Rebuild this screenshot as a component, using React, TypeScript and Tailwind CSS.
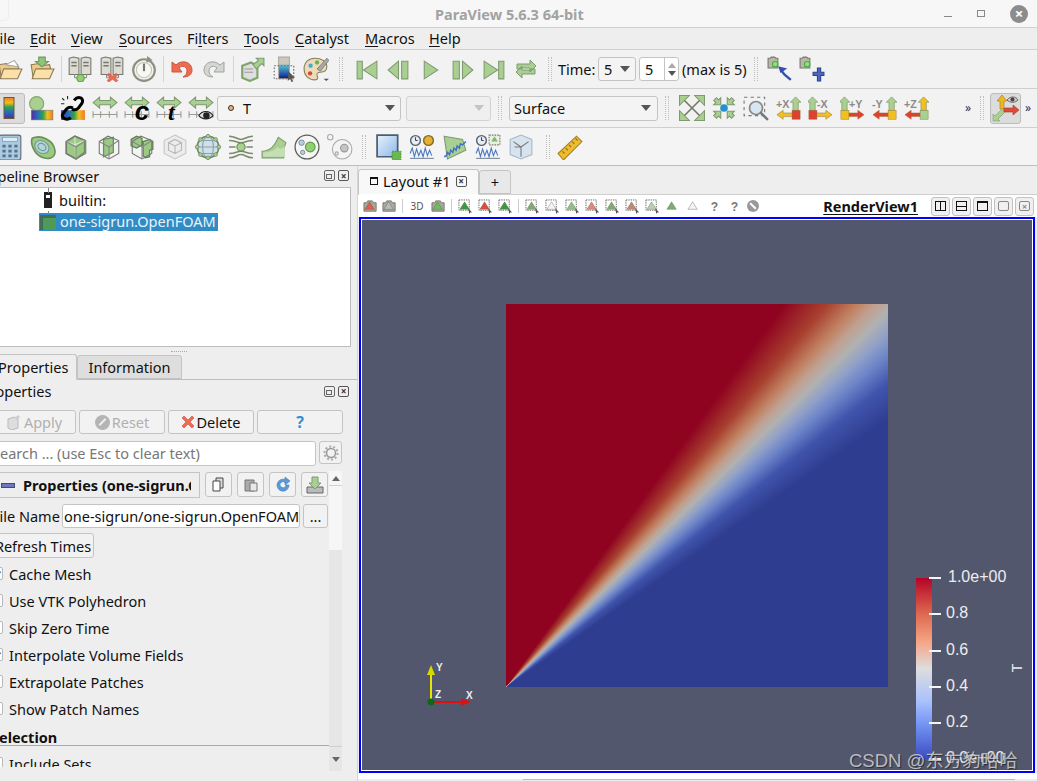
import type { ReactNode } from 'react';

const G = { fill: '#a9d091', stroke: '#7f9a72' };

function Svg({ s = 24, children }: { s?: number; children: ReactNode }) {
  return (
    <svg width={s} height={s} viewBox="0 0 24 24" className="block shrink-0">
      {children}
    </svg>
  );
}

function Slot({ w = 'w-[32px]', children }: { w?: string; children?: ReactNode }) {
  return <div className={`${w} h-full shrink-0 flex items-center justify-center`}>{children}</div>;
}

function Sep() {
  return (
    <div className="w-[6px] h-full shrink-0 flex items-center justify-center">
      <div className="w-px h-[26px] bg-[#d4d4d4]" />
    </div>
  );
}

function Grip({ w }: { w: string }) {
  return (
    <div className={`${w} h-full shrink-0 flex items-center justify-center`}>
      <div className="w-[4px] h-[24px] border-x border-dotted border-[#bdbdbd]" />
    </div>
  );
}

function Caret({ c = '#555' }: { c?: string }) {
  return (
    <svg width="10" height="6" viewBox="0 0 10 6" className="shrink-0">
      <path d="M0 0h10L5 6z" fill={c} />
    </svg>
  );
}

function Folder({ down }: { down?: boolean }) {
  return (
    <Svg s={26}>
      <path d="M2 8l7-1 2 2 8-1 1 4H7L4 21z" fill="#efc987" stroke="#8b7a55" />
      {!down && <path d="M8 8l8-4 4 6z" fill="#fff" stroke="#aaa" />}
      <path d="M6 12h17l-4 9H3z" fill="#fbe0a8" stroke="#8b7a55" />
      {down && <path d="M9 1h6v4h3l-6 5-6-5h3z" fill="#8fc57a" stroke="#6f9a5f" />}
    </Svg>
  );
}

function Server({ state }: { state: 'on' | 'off' }) {
  const box = (x: number) => (
    <g>
      <path d={`M${x} 2l4-1 5 1v15h-9z`} fill="#dcdcd4" stroke="#77776d" />
      <path d={`M${x + 2} 6h5M${x + 2} 9h5`} stroke="#77776d" strokeWidth="1.5" />
    </g>
  );
  return (
    <Svg s={26}>
      {box(2)}
      {box(13)}
      <path d="M7 17v3M18 17v3M7 20h11" stroke="#888" fill="none" />
      {state === 'on' ? (
        <circle cx="12.5" cy="20.5" r="3.4" fill="#8fd06f" stroke="#5f9a4f" />
      ) : (
        <path d="M9 16l3.500 2.500L16 16l1.500 1.500-3 2.500 3 2.500L16 24l-3.500-2.500L9 24l-1.500-1.500 3-2.500-3-2.500z" fill="#ee6a50" stroke="#c0503c" strokeWidth=".5" />
      )}
    </Svg>
  );
}

function Clock() {
  return (
    <Svg s={26}>
      <circle cx="12" cy="13" r="10" fill="none" stroke="#8f9080" strokeWidth="2" />
      <circle cx="12" cy="13" r="7" fill="#f8f8f2" stroke="#c4c4ba" />
      <path d="M12 7v7" stroke="#77776d" strokeWidth="2" />
      <path d="M15 0l5 4-6 2z" fill="#8f9080" />
    </Svg>
  );
}

function Undo({ redo }: { redo?: boolean }) {
  return (
    <svg width="24" height="24" viewBox="0 0 24 24" className={redo ? 'block -scale-x-100' : 'block'}>
      <path
        d="M2 5v10h10l-3-4c3-3 8-2 8 3 0 3-2 5-4 6 6 0 9-3 9-7 0-8-10-11-16-5z"
        fill={redo ? '#d4d6d4' : '#ee6a50'}
        stroke={redo ? '#a0a2a0' : '#c95a3c'}
      />
    </svg>
  );
}

function Extract() {
  return (
    <Svg s={26}>
      <path d="M3 9l8-3 6 3v11l-7 3-7-3z" fill="#dedede" stroke="#7fa66a" strokeWidth="2" />
      <path d="M5 12h8M5 15h8" stroke="#999" />
      <path d="M13 8l5-4-2-2h7v7l-2-2-5 5z" fill={G.fill} stroke={G.stroke} />
    </Svg>
  );
}

function ColorPick() {
  return (
    <Svg s={26}>
      <defs>
        <linearGradient id="cp" x1="0" y1="0" x2="0" y2="1">
          <stop offset=".3" stopColor="#cfc8ba" />
          <stop offset=".45" stopColor="#46b0c8" />
          <stop offset=".85" stopColor="#1f3fa8" />
          <stop offset="1" stopColor="#1a1a40" />
        </linearGradient>
      </defs>
      <path d="M7 1h10v20H7z" fill="url(#cp)" stroke="#aaa" />
      <path d="M3 9h18v12H3z" fill="none" stroke="#666" strokeDasharray="1.5 1.5" />
      <path d="M16 14l6 6-3 .5 1.500 3-1.500.5-1.500-3-2 2z" fill="#555" />
    </Svg>
  );
}

function Palette() {
  return (
    <Svg s={26}>
      <path d="M11 2C5 2 1 6 1 12s4 10 10 10c3 0 3-2 2-4s1-3 3-3 6 0 6-5c0-5-5-8-11-8z" fill="#ecdcb8" stroke="#8b7f62" />
      <circle cx="7" cy="9" r="2" fill="#43a9dc" />
      <circle cx="13" cy="6" r="2" fill="#6fb24c" />
      <circle cx="6.5" cy="16" r="2" fill="#e0453a" />
      <path d="M22 2l2 2-8 10-3-2z" fill="#a8a8a8" stroke="#666" strokeWidth=".6" />
      <path d="M19 21h5l-2.500 2z" fill="#555" />
    </Svg>
  );
}

function Vcr({ kind }: { kind: 'first' | 'prev' | 'play' | 'next' | 'last' }) {
  const d = {
    first: 'M3 4h5v17H3zM22 4v17L9 12.500z',
    prev: 'M12 4v17L2 12.500zM15 4h6v17h-6z',
    play: 'M6 4l13 8.500L6 21z',
    next: 'M3 4h6v17H3zM12 4l10 8.500L12 21z',
    last: 'M2 4l13 8.500L2 21zM16 4h5v17h-5z',
  }[kind];
  return (
    <Svg s={25}>
      <path d={d} fill={G.fill} stroke={G.stroke} />
    </Svg>
  );
}

function Loop() {
  return (
    <Svg s={24}>
      <path d="M3 12V7h13V3l6 6-6 6v-4H7v1zM21 12v5H8v4l-6-6 6-6v4h9v-1z" fill={G.fill} stroke={G.stroke} />
    </Svg>
  );
}

function CamTool({ plus }: { plus?: boolean }) {
  return (
    <Svg s={26}>
      <path d="M1 2h2l1-1h3l1 1h2v9H1z" fill="#b6b8a6" stroke="#77776d" />
      <circle cx="7.5" cy="7.5" r="2.500" fill="#8fe07f" stroke="#4faa44" />
      {plus ? (
        <path d="M13 15h4v-4h3v4h3v3h-3v5h-3v-5h-4z" fill="#4a66c0" stroke="#2f3f8f" />
      ) : (
        <path d="M13 13l3 4 6 5M13 14l-1-3 4 1z" fill="none" stroke="#3350b0" strokeWidth="2.2" />
      )}
    </Svg>
  );
}

function Spectrum({ id, x1 = 0, y1 = 1, x2 = 0, y2 = 0 }: { id: string; x1?: number; y1?: number; x2?: number; y2?: number }) {
  return (
    <defs>
      <linearGradient id={id} x1={x1} y1={y1} x2={x2} y2={y2}>
        <stop offset="0" stopColor="#5a2a9a" />
        <stop offset=".3" stopColor="#1f6fc0" />
        <stop offset=".55" stopColor="#37a04a" />
        <stop offset=".75" stopColor="#f0c020" />
        <stop offset="1" stopColor="#ee7a20" />
      </linearGradient>
    </defs>
  );
}

function ScalarBar() {
  return (
    <Svg s={24}>
      <Spectrum id="sb" />
      <rect x="7" y="1.5" width="10" height="21" fill="url(#sb)" stroke="#6b5a3a" />
    </Svg>
  );
}

function BallBar() {
  return (
    <Svg s={26}>
      <Spectrum id="bb" x1={0} y1={0} x2={1} y2={0} />
      <circle cx="8" cy="8" r="6.5" fill={G.fill} stroke="#7fa66a" />
      <rect x="3" y="14" width="20" height="9" fill="url(#bb)" stroke="#777" strokeWidth=".5" />
    </Svg>
  );
}

function ChainBar() {
  return (
    <Svg s={26}>
      <Spectrum id="cb" x1={0} y1={0} x2={1} y2={0} />
      <rect x="1" y="14" width="22" height="9" fill="url(#cb)" />
      <path d="M13 5c4-5 10-2 7 3l-3 4c-2 2-4 2-6 1" fill="none" stroke="#000" strokeWidth="2.8" />
      <path d="M10 21c-4 3-10 0-7-4l3-4c2-2 4-2 6-1" fill="none" stroke="#000" strokeWidth="2.8" />
      <path d="M2 3l2 2M7 1v3M1 8h3" stroke="#222" />
    </Svg>
  );
}

function Rescale({ glyph }: { glyph?: 'c' | 't' | 'eye' }) {
  return (
    <Svg s={26}>
      <path d="M1 7l6-5v3h10V2l6 5-6 5V9H7v3z" fill={G.fill} stroke={G.stroke} />
      <path d="M1 18h22M1 15v6M8 15v6M16 15v6M23 15v6" fill="none" stroke="#9a9a94" />
      {glyph === 'c' && <text x="10" y="23" fontSize="24" fontWeight="700" fontStyle="italic" fontFamily="Liberation Sans, sans-serif">c</text>}
      {glyph === 't' && <text x="11" y="23" fontSize="22" fontWeight="700" fontStyle="italic" fontFamily="Liberation Serif, serif">t</text>}
      {glyph === 'eye' && (
        <g>
          <path d="M10 19c3-5 10-5 13 0-3 4-10 4-13 0z" fill="#ddd" stroke="#222" />
          <circle cx="17" cy="19" r="3" fill="#222" />
        </g>
      )}
    </Svg>
  );
}

function FitIn({ inward }: { inward?: boolean }) {
  return (
    <Svg s={26}>
      {!inward && <path d="M3 3l18 18M21 3L3 21" stroke="#6f7a68" strokeWidth="1.5" />}
      {[0, 90, 180, 270].map(a => (
        <g key={a} transform={`rotate(${a} 12 12)`}>
          {inward ? (
            <path d="M9 9H2.500l2-2-2-2 2.500-2.500 2 2 2-2z" fill={G.fill} stroke={G.stroke} />
          ) : (
            <path d="M.5 .5h9l-9 9z" fill={G.fill} stroke={G.stroke} />
          )}
        </g>
      ))}
      {inward && <circle cx="12" cy="12" r="3.5" fill="#2490d0" />}
    </Svg>
  );
}

function ZoomBox() {
  return (
    <Svg s={26}>
      <path d="M1 2h19v17H1z" fill="none" stroke="#777" strokeDasharray="3 3" />
      <circle cx="12" cy="12" r="6" fill="#d6e6f2" stroke="#8a8a8a" strokeWidth="1.6" />
      <path d="M16 16l7 7" stroke="#777" strokeWidth="2.4" />
    </Svg>
  );
}

function Axis({ label, side, up, h, box }: { label: string; side: 'l' | 'r'; up: string; h: string; box: string }) {
  const left = side === 'l';
  return (
    <svg width="25" height="25" viewBox="0 0 28 28" className="block shrink-0">
      <text x={left ? 10 : 0} y="13" fontSize="12" fontWeight="700" fill="#8a8a8a" fontFamily="Liberation Sans, sans-serif">{label}</text>
      <path transform={left ? 'translate(5 0)' : 'translate(22 0)'} d="M-3 16V7H-6L0 1l6 6H3v9z" fill={up} stroke="#7f8a60" strokeWidth=".7" />
      {left ? (
        <>
          <path d="M9 19h11v-3l7 5-7 5v-3H9z" fill={h} stroke="#9a7a40" strokeWidth=".6" />
          <rect x="1" y="16" width="9" height="10" fill={box} stroke="#8a7040" strokeWidth=".5" />
        </>
      ) : (
        <>
          <path d="M19 19H8v-3l-7 5 7 5v-3h11z" fill={h} stroke="#9a7a40" strokeWidth=".6" />
          <rect x="18" y="16" width="9" height="10" fill={box} stroke="#8a7040" strokeWidth=".5" />
        </>
      )}
    </svg>
  );
}

function AxesToggle() {
  return (
    <svg width="28" height="28" viewBox="0 0 28 28" className="block shrink-0">
      <path d="M8 15V7H5l5-6 5 6h-3v8z" fill="#f0b820" stroke="#9a7a30" strokeWidth=".6" />
      <path d="M10 15l-7 7-2-2v7h7l-2-2 7-7z" fill={G.fill} stroke={G.stroke} strokeWidth=".6" />
      <path d="M12 14h9v-3l6 5-6 5v-3h-9z" fill="#e04a38" stroke="#a03a2a" strokeWidth=".6" />
      <path d="M15 6c3-4 9-4 11 0-3 3-8 3-11 0z" fill="#ccc" stroke="#666" />
      <circle cx="20.5" cy="5.5" r="2" fill="#444" />
    </svg>
  );
}

function Calc() {
  return (
    <Svg s={26}>
      <rect x="2" y="1" width="20" height="23" rx="2" fill="#a9cbe4" stroke="#667" />
      <rect x="5" y="3" width="14" height="4" fill="#dcecf6" stroke="#78899a" strokeWidth=".6" />
      <path d="M5 10h3v2.500H5zM10.500 10h3v2.500h-3zM16 10h3v2.500h-3zM5 14.500h3V17H5zM10.500 14.500h3V17h-3zM16 14.500h3V17h-3zM5 19h3v2.500H5zM10.500 19h3v2.500h-3zM16 19h3v2.500h-3z" fill="#5d7183" />
    </Svg>
  );
}

function Contour() {
  return (
    <Svg s={26}>
      <path d="M2 4c8-4 20 2 21 11 1 8-7 9-13 6C4 18 0 9 2 4z" fill="#9bca82" stroke="#6b8f5c" strokeWidth="1.5" />
      <ellipse cx="11" cy="12" rx="7" ry="5.5" transform="rotate(35 11 12)" fill="#b6d6d2" stroke="#6f9a90" />
      <ellipse cx="11" cy="12" rx="4" ry="3" transform="rotate(35 11 12)" fill="none" stroke="#5f90a8" />
    </Svg>
  );
}

function Cube({ kind }: { kind: 'clip' | 'slice' | 'extract' | 'gray' }) {
  if (kind === 'gray') {
    return (
      <Svg s={26}>
        <path d="M12 1l10 5v12l-10 5-10-5V6z" fill="#ececec" stroke="#c6c6c6" />
        <path d="M12 5l6 3v7l-6 3-6-3V8zM12 11v7M6 8l6 3 6-3" fill="none" stroke="#b6b6b6" />
      </Svg>
    );
  }
  return (
    <Svg s={26}>
      {kind === 'clip' && <path d="M3 7l8-5 9 4v11l-8 6-9-5z" fill="#9cca84" stroke="#6b8f5c" strokeWidth="1.5" />}
      {kind === 'slice' && <path d="M7 5l9-2v14l-9 4z" fill="#9cca84" stroke="#6b8f5c" strokeWidth="1.2" />}
      {kind === 'extract' && <path d="M2 5l5-3 5 2v6l-5 3-5-2zM13 7l6-2 3 2v7l-3 1v6l-4 1-2-2z" fill="#9cca84" stroke="#5f7f50" strokeWidth="1.2" />}
      {kind === 'clip' && <path d="M11 2v8l9-4M11 10l1 13M11 10l-8-3" fill="none" stroke="#d6ead0" />}
      <path d="M3 7l8-5 10 4v12l-9 5-9-5z" fill="none" stroke="#777" />
      <path d="M3 7l9 5 9-6M12 12v11" fill="none" stroke="#888" />
    </Svg>
  );
}

function Globe() {
  return (
    <Svg s={26}>
      <circle cx="12" cy="12" r="10" fill="#cfe0ea" stroke="#6d8a5e" strokeWidth="1.4" />
      <ellipse cx="12" cy="12" rx="5" ry="10" fill="none" stroke="#8ca0aa" />
      <path d="M2 12h20M4 6h16M4 18h16" stroke="#8ca0aa" />
      {[[12, 2], [12, 22], [2, 12], [22, 12], [5, 5], [19, 5], [5, 19], [19, 19]].map(([x, y]) => (
        <circle key={`${x}-${y}`} cx={x} cy={y} r="1.7" fill={G.fill} stroke="#6d8a5e" strokeWidth=".7" />
      ))}
    </Svg>
  );
}

function Stream() {
  return (
    <Svg s={26}>
      <path d="M1 2c6 0 7 3 11 3s5-3 11-3M1 6c6 0 7 2 11 2s5-2 11-2M1 12h6M17 12h6M1 18c6 0 7-2 11-2s5 2 11 2M1 22c6 0 7-3 11-3s5 3 11 3" fill="none" stroke="#7a8a6c" strokeWidth="1.4" />
      <circle cx="12" cy="12" r="3.800" fill={G.fill} stroke="#5f8f4f" />
    </Svg>
  );
}

function Warp() {
  return (
    <Svg s={26}>
      <path d="M1 16c8-1 11-4 15-13l7 5c-2 4-2 9-2 14H1z" fill="#a9d091" stroke="#7f9a72" />
      <path d="M2 17c7 0 11-2 13-5 2 2 5 2 7-1v10H2z" fill="#c4dfb6" />
    </Svg>
  );
}

function Glyph({ gray }: { gray?: boolean }) {
  if (gray) {
    return (
      <Svg s={26}>
        <circle cx="14" cy="14" r="9" fill="#f4f4f4" stroke="#a8a8a8" />
        <circle cx="16" cy="13" r="3.5" fill="#c4c4c4" stroke="#999" />
        <circle cx="9" cy="18" r="1.5" fill="#e4e4e4" stroke="#aaa" />
        <circle cx="3" cy="3" r="2.5" fill="#f4f4f4" stroke="#aaa" />
      </Svg>
    );
  }
  return (
    <Svg s={26}>
      <circle cx="12" cy="12" r="11" fill="#f6f6f6" stroke="#5d6258" strokeWidth="1.2" />
      <circle cx="15" cy="12" r="4.5" fill="#8fd06f" stroke="#5f9a4f" />
      <circle cx="7" cy="8" r="2.5" fill="#b6cfe6" stroke="#678" strokeWidth=".7" />
      <circle cx="8" cy="17" r="2" fill="#b6cfe6" stroke="#678" strokeWidth=".7" />
    </Svg>
  );
}

function NewView() {
  return (
    <Svg s={26}>
      <defs>
        <linearGradient id="nv" x1="0" y1="0" x2="1" y2="1">
          <stop offset="0" stopColor="#e8f2fc" />
          <stop offset="1" stopColor="#8cb6ea" />
        </linearGradient>
      </defs>
      <path d="M1 1h19v20H1z" fill="url(#nv)" stroke="#47606f" strokeWidth="1.6" />
      <rect x="15" y="16" width="8" height="8" fill="#6bb84f" stroke="#4f9a3a" strokeDasharray="1.5 1" />
    </Svg>
  );
}

function Chart({ kind }: { kind: 'a' | 'b' | 'c' }) {
  return (
    <Svg s={26}>
      {kind === 'b' ? (
        <path d="M2 2l17 3 3 10-17 8z" fill="#a9d091" stroke="#7f9a72" />
      ) : (
        <circle cx="6" cy="6" r="4.5" fill="#e4eef4" stroke="#58626a" strokeWidth="1.3" />
      )}
      {kind === 'a' && <circle cx="18" cy="6" r="4.5" fill="#e8b030" stroke="#7f6a20" strokeWidth="1.3" />}
      {kind === 'c' && <path d="M13 1h10v9H13z" fill="#e8f0e0" stroke="#777" strokeDasharray="1.5 1" />}
      {kind === 'c' && <path d="M18 2l3 5h-6z" fill="#7fb86a" />}
      {kind !== 'b' && <path d="M6 6V3M6 6h2" stroke="#445" />}
      {kind === 'b' ? (
        <path d="M2 21l2-1 1-3 2 2 1-4 2 2 1-4 2 2 1-4 2 2 1-4 2 1 3-3" fill="none" stroke="#3f6ec8" strokeWidth="1.3" />
      ) : (
        <path d="M1 18l2-5 2 8 2-7 2 6 2-5 2 6 2-8 2 7 2-5 2 5" fill="none" stroke="#4a78c0" strokeWidth="1" />
      )}
      {kind !== 'b' && <path d="M1 22.500h22" stroke="#789" />}
    </Svg>
  );
}

function PlotCube() {
  return (
    <Svg s={26}>
      <path d="M2 5l10-4 10 4v14l-10 4-10-4z" fill="#d6e4f0" stroke="#a8b8c8" />
      <path d="M12 12L5 7M12 12l7-5M12 12v9M12 12H6" stroke="#777" />
    </Svg>
  );
}

function Ruler() {
  return (
    <Svg s={26}>
      <path d="M1 18L18 2l5 5L6 24z" fill="#eebc2c" stroke="#a88420" />
      <path d="M5 16l2 2M8 13l2 2M11 10l2 2M14 7l2 2M17 4l2 2" stroke="#8f7018" />
    </Svg>
  );
}

function Mini({ color = '#5f7a55', kind = 'sel' }: { color?: string; kind?: 'sel' | 'tri' | 'cam' | 'q' }) {
  return (
    <svg width="15" height="15" viewBox="0 0 16 16" className="block shrink-0">
      {kind === 'sel' && <path d="M1 1h11v11H1z" fill="none" stroke="#666" strokeDasharray="1.5 1" />}
      {kind === 'cam' && <path d="M1 4h3l1-2h5l1 2h3v9H1z" fill="#a8aa9a" stroke="#77776d" />}
      {kind === 'q' ? (
        <text x="5" y="13" fontSize="13" fontWeight="700" fill="#777" fontFamily="Liberation Sans, sans-serif">?</text>
      ) : (
        <path d="M7 3l5 8H2z" fill={color} stroke="#556" strokeWidth=".4" />
      )}
      {kind === 'sel' && <path d="M11 10l4 4-2 .3-1 1.700z" fill="#555" />}
    </svg>
  );
}

function WinBtn({ children }: { children: ReactNode }) {
  return (
    <div className="w-[19px] h-[19px] rounded-[3px] border border-[#c2c2c2] bg-[#f0f0f0] flex items-center justify-center">
      {children}
    </div>
  );
}

function DockBtns() {
  return (
    <div className="flex items-center gap-[3px]">
      <div className="w-[11px] h-[11px] rounded-[2px] border border-[#666] relative">
        <div className="absolute left-[1px] bottom-[1px] w-[6px] h-[5px] border border-[#666] bg-[#eee]" />
      </div>
      <div className="w-[11px] h-[11px] rounded-[2px] border border-[#555] flex items-center justify-center text-[10px] leading-none font-bold text-[#333]">×</div>
    </div>
  );
}

function Btn({ className, children }: { className: string; children: ReactNode }) {
  return (
    <div className={`${className} rounded-[3px] border border-[#c4c4c4] bg-[#f2f2f2] flex items-center justify-center shrink-0`}>
      {children}
    </div>
  );
}

const menu = [
  ['F', 'ile', 'w-[38px]'],
  ['E', 'dit', 'w-[41px]'],
  ['V', 'iew', 'w-[48px]'],
  ['S', 'ources', 'w-[68px]'],
  ['', 'Filters', 'w-[57px]'],
  ['T', 'ools', 'w-[51px]'],
  ['C', 'atalyst', 'w-[70px]'],
  ['M', 'acros', 'w-[64px]'],
  ['H', 'elp', 'w-[50px]'],
];

const checks = [
  ['Cache Mesh', true],
  ['Use VTK Polyhedron', false],
  ['Skip Zero Time', false],
  ['Interpolate Volume Fields', true],
  ['Extrapolate Patches', false],
  ['Show Patch Names', false],
] as const;

const ticks = [
  ['1.0e+00', 'top-[357px]', 'left-[19px]'],
  ['0.8', 'top-[393px]', 'left-[17px]'],
  ['0.6', 'top-[430px]', 'left-[17px]'],
  ['0.4', 'top-[466px]', 'left-[17px]'],
  ['0.2', 'top-[502px]', 'left-[17px]'],
  ['0.0e+00', 'top-[538px]', 'left-[17px]'],
];

function PropertiesScroller() {
  return (
    <div className="h-[300px] flex shrink-0">
      <div className="w-[329px] h-[296px] overflow-hidden flex flex-col">
        <div className="flex items-start h-[31px] pt-[1px] shrink-0">
          <div className="-ml-[8px] w-[208px] h-[26px] border border-[#c4c4c4] flex items-center pl-[8px] gap-[8px] overflow-hidden">
            <div className="w-[14px] h-[5px] bg-[#6e78c0] border border-[#444a80] shrink-0" />
            <span className="font-bold whitespace-nowrap w-[168px] overflow-hidden shrink-0">Properties (one-sigrun.OpenFOAM)</span>
          </div>
          <Btn className="ml-[5px] w-[27px] h-[25px]">
            <svg width="16" height="16" viewBox="0 0 16 16"><path d="M5 1h7v10H5z" fill="#ddd" stroke="#444" /><path d="M2 4h7v10H2z" fill="#fff" stroke="#444" /></svg>
          </Btn>
          <Btn className="ml-[5px] w-[27px] h-[25px]">
            <svg width="16" height="16" viewBox="0 0 16 16"><path d="M2 3h9v11H2z" fill="#aaa" stroke="#777" /><path d="M7 6h7v8H7z" fill="#e8e8e8" stroke="#777" /></svg>
          </Btn>
          <Btn className="ml-[5px] w-[27px] h-[25px]">
            <svg width="18" height="18" viewBox="0 0 18 18"><path d="M15 9A6 6 0 1 1 11 3.500V1l5 4-5 4V6.500A3 3 0 1 0 12 9z" fill="#5b9ad8" stroke="#3a78b8" strokeWidth=".6" /></svg>
          </Btn>
          <Btn className="ml-[5px] w-[27px] h-[25px]">
            <svg width="20" height="20" viewBox="0 0 20 20"><path d="M2 12h16v6H2z" fill="#bbb" stroke="#666" /><path d="M7 2h6v6h3l-6 6-6-6h3z" fill="#a9d091" stroke="#7f9a72" /></svg>
          </Btn>
        </div>
        <div className="flex items-center h-[30px] pb-[3px] shrink-0">
          <span className="-ml-[8px] w-[70px] shrink-0 whitespace-nowrap">File Name</span>
          <div className="w-[238px] h-[24px] rounded-[3px] border border-[#c4c4c4] bg-white pl-[1px] flex items-center shrink-0 overflow-hidden whitespace-nowrap">
            one-sigrun/one-sigrun.OpenFOAM
          </div>
          <Btn className="ml-[3px] w-[25px] h-[24px]">...</Btn>
        </div>
        <div className="h-[27px] flex items-center shrink-0">
          <Btn className="-ml-[8px] w-[102px] h-[25px] whitespace-nowrap">Refresh Times</Btn>
        </div>
        <div className="flex flex-col pt-[1px] shrink-0">
          {checks.map(([label, on]) => (
            <div key={label} className="h-[27px] flex items-center gap-[6px] -ml-[10px]">
              <div className="w-[13px] h-[13px] rounded-[2px] border border-[#b8b8b8] bg-white shrink-0 flex items-center justify-end text-[10px] leading-none font-bold text-[#222]">
                {on ? '✓' : ''}
              </div>
              <span className="whitespace-nowrap">{label}</span>
            </div>
          ))}
        </div>
        <div className="font-bold -ml-[9px] mt-[6px] h-[17px] flex items-center whitespace-nowrap shrink-0">Selection</div>
        <div className="h-px bg-[#a8a8a8] shrink-0" />
        <div className="h-[27px] mt-[4px] flex items-center gap-[6px] -ml-[10px] shrink-0">
          <div className="w-[13px] h-[13px] rounded-[2px] border border-[#b8b8b8] bg-white shrink-0" />
          <span className="whitespace-nowrap">Include Sets</span>
        </div>
      </div>
      <div className="w-[13px] flex flex-col shrink-0">
        <div className="h-[15px] bg-[#f6f6f6] border-b border-[#d0d0d0] flex items-center justify-center">
          <svg width="8" height="5" viewBox="0 0 8 5"><path d="M0 5h8L4 0z" fill="#666" /></svg>
        </div>
        <div className="h-[64px] bg-[#f6f6f6]" />
        <div className="flex-1 bg-[#e6e6e6]" />
        <div className="h-[25px] bg-[#e6e6e6] border-t border-[#d0d0d0] flex items-center justify-center">
          <svg width="8" height="5" viewBox="0 0 8 5"><path d="M0 0h8L4 5z" fill="#666" /></svg>
        </div>
      </div>
    </div>
  );
}

function LeftPanel() {
  return (
    <aside className="w-[357px] shrink-0 flex flex-col overflow-hidden">
      <div className="h-[21px] pb-[2px] flex items-center justify-between pr-[8px] shrink-0">
        <span className="-ml-[15px] whitespace-nowrap">Pipeline Browser</span>
        <DockBtns />
      </div>
      <div className="w-[351px] h-[160px] border-y border-r border-[#bdbdbd] bg-white shrink-0">
        <div className="pl-[39px] relative">
          <div className="absolute left-[48px] top-0 w-px h-[5px] bg-[#888]" />
          <div className="absolute left-[48px] top-[23px] w-px h-[3px] bg-[#888]" />
          <div className="h-[24px] flex items-center pl-[5px] gap-[7px]">
            <div className="w-[8px] h-[16px] bg-[#222] flex flex-col items-center pt-[3px] shrink-0">
              <div className="w-[4px] h-[3px] bg-white" />
            </div>
            <span>builtin:</span>
          </div>
          <div className="w-[179px] h-[18px] mt-[1px] bg-[#308cc6] text-[#eaf3fa] flex items-center gap-[4px] pl-[1px]">
            <div className="w-[16px] h-[15px] bg-[#4f9a55] border-t-[3px] border-l-[3px] border-[#3f6f5a] shrink-0" />
            <span className="whitespace-nowrap -mt-[2px]">one-sigrun.OpenFOAM</span>
          </div>
        </div>
      </div>
      <div className="h-[8px] flex items-center justify-center shrink-0">
        <div className="w-[16px] border-t border-dotted border-[#aaa]" />
      </div>
      <div className="h-[25px] flex items-end border-b border-[#bdbdbd] shrink-0">
        <div className="-ml-[5px] w-[82px] h-[26px] -mb-px pl-[2px] rounded-t-[3px] border border-[#c4c4c4] border-b-[#eeeeee] bg-[#eeeeee] flex items-center whitespace-nowrap z-10">Properties</div>
        <div className="w-[105px] h-[24px] rounded-t-[3px] border border-[#c4c4c4] bg-[#dedede] flex items-center justify-center">Information</div>
      </div>
      <div className="h-[22px] flex items-center justify-between pr-[8px] shrink-0">
        <span className="-ml-[19px] whitespace-nowrap">Properties</span>
        <DockBtns />
      </div>
      <div className="flex gap-[3px] h-[38px] items-start pt-[8px] shrink-0">
        <Btn className="-ml-[8px] w-[84px] h-[24px] text-[#b0b0b0] gap-[2px]">
          <svg width="16" height="16" viewBox="0 0 16 16"><path d="M2 5l6-2 4 2v9l-6 2-4-2z" fill="#ddd" stroke="#bbb" /><path d="M9 4l3-3 2 2-3 3z" fill="#ccc" /></svg>
          Apply
        </Btn>
        <Btn className="w-[86px] h-[24px] text-[#b0b0b0] gap-[2px]">
          <div className="w-[15px] h-[15px] rounded-full bg-[#b4b4b4] flex items-center justify-center">
            <div className="w-[9px] h-[2px] bg-[#eee] -rotate-45" />
          </div>
          Reset
        </Btn>
        <Btn className="w-[86px] h-[24px] text-[#111] gap-[1px]">
          <svg width="14" height="14" viewBox="0 0 14 14"><path d="M1 3l2-2 4 4 4-4 2 2-4 4 4 4-2 2-4-4-4 4-2-2 4-4z" fill="#ee6a50" stroke="#c8503c" strokeWidth=".6" /></svg>
          Delete
        </Btn>
        <Btn className="w-[86px] h-[24px] text-[#2f8fd0] font-bold text-[16px]">?</Btn>
      </div>
      <div className="flex h-[31px] items-start pt-[1px] shrink-0">
        <div className="-ml-[10px] w-[326px] h-[25px] pb-[2px] rounded-[3px] border border-[#c4c4c4] bg-white flex items-center pl-[1px] text-[#777] whitespace-nowrap">
          Search ... (use Esc to clear text)
        </div>
        <Btn className="ml-[3px] w-[23px] h-[23px]">
          <svg width="16" height="16" viewBox="0 0 16 16"><circle cx="8" cy="8" r="4.5" fill="none" stroke="#999" strokeWidth="1.5" /><circle cx="8" cy="8" r="6.5" fill="none" stroke="#aaa" strokeWidth="2" strokeDasharray="2 2" /></svg>
        </Btn>
      </div>
      <PropertiesScroller />
    </aside>
  );
}

function ViewToolbar() {
  return (
    <div className="h-[22px] bg-white flex items-center pl-[2px] shrink-0">
      <div className="flex items-center h-full text-[#555]">
        <Slot w="w-[20px]"><Mini kind="cam" color="#e0604a" /></Slot>
        <Slot w="w-[19px]"><Mini kind="cam" color="#bbb" /></Slot>
        <div className="w-px h-[14px] bg-[#ccc] mx-[3px]" />
        <Slot w="w-[22px]"><span className="text-[10px]">3D</span></Slot>
        <Slot w="w-[20px]"><Mini kind="cam" color="#6cc05a" /></Slot>
        <div className="w-px h-[14px] bg-[#ccc] mx-[3px]" />
        <Slot w="w-[20px]"><Mini color="#3a9a3a" /></Slot>
        <Slot w="w-[20px]"><Mini color="#e04a38" /></Slot>
        <Slot w="w-[20px]"><Mini color="#3a9a3a" /></Slot>
        <div className="w-px h-[14px] bg-[#ccc] mx-[3px]" />
        <Slot w="w-[20px]"><Mini color="#7fae6a" /></Slot>
        <Slot w="w-[20px]"><Mini color="#f4f4f4" /></Slot>
        <Slot w="w-[20px]"><Mini color="#8fc47a" /></Slot>
        <Slot w="w-[20px]"><Mini color="#e08a70" /></Slot>
        <Slot w="w-[20px]"><Mini color="#7fae6a" /></Slot>
        <Slot w="w-[20px]"><Mini color="#c08a70" /></Slot>
        <Slot w="w-[20px]"><Mini color="#bcd0b0" /></Slot>
        <Slot w="w-[21px]"><Mini kind="tri" color="#7fae6a" /></Slot>
        <Slot w="w-[20px]"><Mini kind="tri" color="#f4f4f4" /></Slot>
        <Slot w="w-[20px]"><Mini kind="q" /></Slot>
        <Slot w="w-[20px]"><Mini kind="q" /></Slot>
        <Slot w="w-[20px]">
          <div className="w-[12px] h-[12px] rounded-full bg-[#999] flex items-center justify-center">
            <div className="w-[8px] h-[2px] bg-white rotate-45" />
          </div>
        </Slot>
      </div>
      <span className="ml-auto font-bold underline underline-offset-2 whitespace-nowrap">RenderView1</span>
      <div className="flex gap-[2px] ml-[13px] mr-[3px]">
        <WinBtn><div className="w-[11px] h-[10px] border border-[#111] flex justify-center"><div className="w-px bg-[#111]" /></div></WinBtn>
        <WinBtn><div className="w-[11px] h-[10px] border border-[#111] flex items-center"><div className="h-px w-full bg-[#111]" /></div></WinBtn>
        <WinBtn><div className="w-[11px] h-[10px] border border-[#111] border-t-2" /></WinBtn>
        <WinBtn><div className="w-[11px] h-[10px] border border-[#888] rounded-[2px]" /></WinBtn>
        <WinBtn><div className="w-[11px] h-[10px] border border-[#888] rounded-[2px] flex items-center justify-center text-[9px] leading-none font-bold text-[#888]">×</div></WinBtn>
      </div>
    </div>
  );
}

function Scene() {
  return (
    <div className="ml-[1px] mr-[2px] border-2 border-[#0000ff] p-px bg-white h-[556px] shrink-0">
      <div className="relative h-full bg-[#52576e] overflow-hidden font-['Liberation_Sans',sans-serif] text-[#ededed]">
        <div className="absolute left-[144px] top-[84px] w-[382px] h-[383px] bg-[conic-gradient(from_0deg_at_0%_100%,#8f0320_0deg,#8f0320_36deg,#a8402f_40deg,#c08060_42.5deg,#c0a090_44deg,#b1b1b1_45.5deg,#90a0c8_47.2deg,#6c84c8_49deg,#4054ac_51.5deg,#2f3d90_55deg,#2f3d90_90deg)]" />
        <svg width="60" height="60" viewBox="0 0 60 60" className="absolute left-[53px] top-[437px]">
          <path d="M16 45V12" stroke="#e6e600" strokeWidth="2" />
          <path d="M12 18l4-10 4 10z" fill="#d8d800" />
          <path d="M16 45h36" stroke="#e01010" strokeWidth="2" />
          <path d="M46 41l10 4-10 4z" fill="#e01010" />
          <circle cx="16" cy="45" r="3.5" fill="#0a6a1a" />
          <text x="21" y="14" fontSize="10" fontWeight="700" fill="#eee">Y</text>
          <text x="20" y="41" fontSize="10" fontWeight="700" fill="#eee">Z</text>
          <text x="51" y="42" fontSize="10" fontWeight="700" fill="#eee">X</text>
        </svg>
        <div className="absolute left-[554px] top-[358px] w-[16px] h-[181px] bg-[linear-gradient(to_bottom,#b40426,#dd6a50_20%,#f6a385_35%,#dddddd_50%,#a9c1fd_68%,#6f90f0_82%,#3b4cc0)]" />
        {ticks.map(([label, top, left]) => (
          <div key={label} className={`absolute ${top} left-[567px] w-[12px] h-[2px] bg-[#f4f4f4]`}>
            <span className={`absolute -top-[10px] ${left} text-[16px] leading-[20px] whitespace-nowrap`}>{label}</span>
          </div>
        ))}
        <div className="absolute left-[651px] top-[441px] text-[14px] leading-none -rotate-90 origin-center">T</div>
        <div className="absolute left-[487px] top-[529px] text-[18.5px] leading-[24px] whitespace-nowrap text-[#c6c6c6] opacity-90 font-['Liberation_Sans','Noto_Sans_CJK_SC',sans-serif] [text-shadow:1px_1px_1px_rgba(0,0,0,.55)]">
          CSDN @东方豹哈哈
        </div>
      </div>
    </div>
  );
}

export default function App() {
  return (
    <div className="w-[1037px] h-[781px] overflow-hidden bg-[#eeeeee] text-[#111] text-[14.5px] leading-[18px] font-['Noto_Sans',sans-serif] flex flex-col">
      <header className="h-[28px] shrink-0 bg-[#f7f7f7] border-b border-[#cfcfcf] flex items-center">
        <div className="w-[435px] shrink-0 h-full">
          <div className="w-[9px] h-[21px] rounded-br-[5px] border-r border-b border-[#ededed]" />
        </div>
        <span className="font-bold text-[#a2a2a2] whitespace-nowrap">ParaView 5.6.3 64-bit</span>
        <div className="ml-auto flex items-center pr-[9px] gap-[25px]">
          <div className="w-[8px] h-px bg-[#888] mt-[6px]" />
          <div className="w-[8px] h-[7px] border border-[#888]" />
          <div className="w-[18px] h-[18px] rounded-full bg-[#8c8c8c] text-white flex items-center justify-center text-[15px] font-bold leading-none">×</div>
        </div>
      </header>

      <nav className="h-[22px] pb-[2px] shrink-0 flex items-center border-b border-[#cfcfcf] -ml-[8px]">
        {menu.map(([acc, rest, w]) => (
          <div key={rest} className={`${w} shrink-0 whitespace-nowrap`}>
            <span className="underline underline-offset-2">{acc}</span>
            {rest === 'Filters' ? <>Fi<span className="underline underline-offset-2">l</span>ters</> : rest}
          </div>
        ))}
      </nav>

      <div className="h-[39px] shrink-0 flex items-center border-b border-[#cfcfcf] -ml-[6px] bg-[#f2f2f2]">
        <Slot><Folder /></Slot>
        <Slot><Folder down /></Slot>
        <Sep />
        <Slot><Server state="on" /></Slot>
        <Slot><Server state="off" /></Slot>
        <Slot><Clock /></Slot>
        <Sep />
        <Slot><Undo /></Slot>
        <Slot><Undo redo /></Slot>
        <Sep />
        <Slot><Extract /></Slot>
        <Slot><ColorPick /></Slot>
        <Slot><Palette /></Slot>
        <Grip w="w-[18px]" />
        <Slot><Vcr kind="first" /></Slot>
        <Slot><Vcr kind="prev" /></Slot>
        <Slot><Vcr kind="play" /></Slot>
        <Slot><Vcr kind="next" /></Slot>
        <Slot><Vcr kind="last" /></Slot>
        <Slot><Loop /></Slot>
        <Grip w="w-[16px]" />
        <span className="w-[40px] shrink-0">Time:</span>
        <div className="w-[38px] h-[24px] rounded-[3px] border border-[#c4c4c4] bg-[#f4f4f4] flex items-center justify-between px-[5px] shrink-0">5<Caret /></div>
        <div className="ml-[3px] w-[40px] h-[24px] rounded-[3px] border border-[#c4c4c4] bg-white flex items-center justify-between pl-[5px] shrink-0">
          5
          <div className="w-[14px] h-full border-l border-[#c4c4c4] flex flex-col items-center justify-center gap-[3px]">
            <svg width="8" height="5" viewBox="0 0 8 5"><path d="M0 5h8L4 0z" fill="#aaa" /></svg>
            <svg width="8" height="5" viewBox="0 0 8 5"><path d="M0 0h8L4 5z" fill="#555" /></svg>
          </div>
        </div>
        <span className="ml-[3px] w-[66px] shrink-0 whitespace-nowrap">(max is 5)</span>
        <Grip w="w-[16px]" />
        <Slot w="w-[32px]"><CamTool /></Slot>
        <Slot w="w-[32px]"><CamTool plus /></Slot>
      </div>

      <div className="h-[39px] shrink-0 flex items-center border-b border-[#cfcfcf] -ml-[7px] bg-[#f2f2f2]">
        <div className="w-[32px] h-[31px] shrink-0 rounded-[3px] border border-[#bcbcbc] bg-[#dcdcdc] flex items-center justify-center"><ScalarBar /></div>
        <Slot><BallBar /></Slot>
        <Slot><ChainBar /></Slot>
        <Slot><Rescale /></Slot>
        <Slot><Rescale glyph="c" /></Slot>
        <Slot><Rescale glyph="t" /></Slot>
        <Slot><Rescale glyph="eye" /></Slot>
        <div className="w-[184px] h-[25px] rounded-[3px] border border-[#c4c4c4] bg-[#f4f4f4] flex items-center pl-[10px] pr-[5px] gap-[9px] shrink-0">
          <div className="w-[6px] h-[6px] rounded-full border border-[#333] bg-[#f4b070] shrink-0" />
          <span className="flex-1">T</span>
          <Caret />
        </div>
        <div className="ml-[5px] w-[85px] h-[25px] rounded-[3px] border border-[#d2d2d2] bg-[#efefef] flex items-center justify-end pr-[6px] shrink-0"><Caret c="#c4c4c4" /></div>
        <Grip w="w-[18px]" />
        <div className="w-[149px] h-[25px] rounded-[3px] border border-[#c4c4c4] bg-[#f4f4f4] flex items-center justify-between pl-[4px] pr-[6px] shrink-0">Surface<Caret /></div>
        <Grip w="w-[18px]" />
        <Slot><FitIn /></Slot>
        <Slot><FitIn inward /></Slot>
        <Slot><ZoomBox /></Slot>
        <Slot><Axis label="+X" side="r" up="#a9d091" h="#f0c020" box="#e0402f" /></Slot>
        <Slot><Axis label="-X" side="l" up="#a9d091" h="#f0c020" box="#e0402f" /></Slot>
        <Slot><Axis label="+Y" side="l" up="#a9d091" h="#e0402f" box="#f0c020" /></Slot>
        <Slot><Axis label="-Y" side="r" up="#a9d091" h="#e0402f" box="#f0c020" /></Slot>
        <Slot><Axis label="+Z" side="r" up="#f0c020" h="#e0402f" box="#a9d091" /></Slot>
        <span className="ml-[33px] w-[10px] shrink-0 text-[12px] text-[#333]">»</span>
        <Grip w="w-[14px]" />
        <div className="ml-[1px] w-[31px] h-[31px] rounded-[3px] border border-[#bcbcbc] bg-[#dcdcdc] flex items-center justify-center shrink-0"><AxesToggle /></div>
        <span className="ml-[4px] text-[12px] text-[#333]">»</span>
      </div>

      <div className="h-[37px] shrink-0 flex items-center -ml-[7px] bg-[#f4f4f4]">
        <Slot w="w-[33px]"><Calc /></Slot>
        <Slot w="w-[33px]"><Contour /></Slot>
        <Slot w="w-[33px]"><Cube kind="clip" /></Slot>
        <Slot w="w-[33px]"><Cube kind="slice" /></Slot>
        <Slot w="w-[33px]"><Cube kind="extract" /></Slot>
        <Slot w="w-[33px]"><Cube kind="gray" /></Slot>
        <Slot w="w-[33px]"><Globe /></Slot>
        <Slot w="w-[33px]"><Stream /></Slot>
        <Slot w="w-[33px]"><Warp /></Slot>
        <Slot w="w-[33px]"><Glyph /></Slot>
        <Slot w="w-[33px]"><Glyph gray /></Slot>
        <Grip w="w-[16px]" />
        <Slot w="w-[33px]"><NewView /></Slot>
        <Slot w="w-[33px]"><Chart kind="a" /></Slot>
        <Slot w="w-[33px]"><Chart kind="b" /></Slot>
        <Slot w="w-[33px]"><Chart kind="c" /></Slot>
        <Slot w="w-[33px]"><PlotCube /></Slot>
        <Grip w="w-[22px]" />
        <Slot w="w-[22px]"><Ruler /></Slot>
      </div>

      <main className="flex-1 flex min-h-0 border-t border-[#bdbdbd]">
        <LeftPanel />
        <section className="flex-1 flex flex-col min-w-0 border-l border-[#d6d6d6]">
          <div className="h-[28px] shrink-0 flex items-end pt-[2px]">
            <div className="w-[121px] h-[26px] pb-[2px] -mb-px rounded-t-[3px] border border-[#c4c4c4] border-b-white bg-[#f8f8f8] flex items-center pl-[11px] gap-[5px] z-10 whitespace-nowrap">
              <div className="w-[8px] h-[8px] border border-[#111] border-t-2 shrink-0" />
              Layout #1
              <div className="w-[11px] h-[11px] rounded-[2px] border border-[#555] flex items-center justify-center text-[10px] leading-none font-bold text-[#333]">×</div>
            </div>
            <div className="w-[32px] h-[24px] rounded-t-[3px] border border-[#c4c4c4] bg-[#e8e8e8] flex items-center justify-center">+</div>
          </div>
          <div className="h-px bg-[#cfcfcf] shrink-0" />
          <ViewToolbar />
          <Scene />
          <div className="h-[6px] bg-white shrink-0" />
          <div className="ml-[165px] w-[492px] h-px bg-[#bbb] shrink-0" />
        </section>
      </main>
    </div>
  );
}
